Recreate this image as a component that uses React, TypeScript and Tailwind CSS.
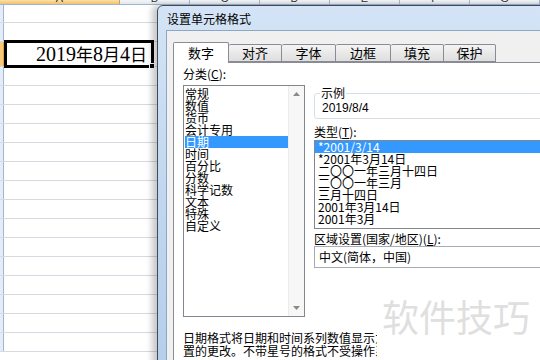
import React from "react";

const categories = ["常规", "数值", "货币", "会计专用", "日期", "时间", "百分比", "分数", "科学记数", "文本", "特殊", "自定义"];
const types = ["*2001/3/14", "*2001年3月14日", "二〇〇一年三月十四日", "二〇〇一年三月", "三月十四日", "2001年3月14日", "2001年3月"];
const tabs = [
  { label: "数字", w: "w-[56px]" },
  { label: "对齐", w: "w-[53px]" },
  { label: "字体", w: "w-[54px]" },
  { label: "边框", w: "w-[55px]" },
  { label: "填充", w: "w-[53px]" },
  { label: "保护", w: "w-[52px]" },
];
const cols = ["B", "C", "D", "E", "F", "G"];

function Row({ h, active, children }: { h: string; active?: boolean; children?: React.ReactNode }) {
  return (
    <div className={`flex ${h} border-b border-[#d4d9e2]`}>
      <div className={`w-[4px] shrink-0 border-r ${active ? "bg-[#f6c879] border-[#d9a550]" : "bg-[#e4ecf7] border-[#9eb6ce]"}`} />
      <div className="flex-1">{children}</div>
    </div>
  );
}

function Arrow({ up }: { up?: boolean }) {
  return (
    <svg width="7" height="4" viewBox="0 0 7 4">
      <path d={up ? "M0 4 L3.5 0 L7 4 Z" : "M0 0 L3.5 4 L7 0 Z"} fill="#8a8a8a" />
    </svg>
  );
}

export default function App() {
  return (
    <div className="relative w-[540px] h-[360px] overflow-hidden bg-white font-['Noto_Sans_CJK_SC',sans-serif] text-black">
      {/* sheet */}
      <div className="flex h-[5px] overflow-hidden border-b border-[#9eb6ce]">
        <div className="w-[148px] flex items-end justify-center bg-gradient-to-b from-[#fbe0a8] to-[#f3c16a] border-r border-[#c9a060]">
          <span className="text-[11px] leading-none text-[#333] font-['Liberation_Sans',sans-serif]">A</span>
        </div>
        {cols.map((c) => (
          <div key={c} className="w-[70px] shrink-0 flex items-end justify-center bg-gradient-to-b from-[#f3f5f8] to-[#e2e7ee] border-r border-[#a9b8ca]">
            <span className="text-[11px] leading-none text-[#333] font-['Liberation_Sans',sans-serif]">{c}</span>
          </div>
        ))}
      </div>
      <Row h="h-[18px]" />
      <Row h="h-[19px]" />
      <Row h="h-[25px]" active>
        <div className="relative -mt-[2px] h-[28px] w-[150px] border-[3px] border-black flex items-center justify-end pr-[4px]">
          <span className="font-['Liberation_Serif','Noto_Sans_CJK_SC',serif] text-[20px] leading-none">
            2019<span className="text-[17px]">年</span>8<span className="text-[17px]">月</span>4<span className="text-[17px]">日</span>
          </span>
          <div className="absolute -right-[4px] -bottom-[4px] w-[6px] h-[6px] bg-black border border-white" />
        </div>
      </Row>
      {Array.from({ length: 15 }).map((_, i) => (
        <Row key={i} h="h-[19px]" />
      ))}

      {/* dialog */}
      <div className="absolute left-[157px] top-[5px] w-[420px] h-[380px] rounded-tl-[6px] border border-[#3d4b5c] bg-gradient-to-b from-[#d4e4f6] via-[#c0d7ef] to-[#b4cdea] shadow-[-5px_0_6px_rgba(0,0,0,0.22)] flex flex-col">
        <div className="h-[24px] flex items-center pl-[9px] pt-[2px] text-[12px] text-black">设置单元格格式</div>
        <div className="flex-1 ml-[8px] border-l border-t border-[#8ea6c2] bg-[#f0f0f0] pl-[6px] pt-[10px] flex flex-col">
          <div className="flex items-end h-[21px]">
            {tabs.map((t, i) =>
              i === 0 ? (
                <div key={t.label} className={`${t.w} h-[21px] -mb-px relative z-10 bg-white border border-b-0 border-[#898c95] rounded-t-[2px] flex items-center justify-center text-[13px]`}>
                  {t.label}
                </div>
              ) : (
                <div key={t.label} className={`${t.w} h-[18px] bg-gradient-to-b from-[#f4f4f4] to-[#dedede] border border-l-0 border-[#898c95] rounded-t-[2px] flex items-center justify-center text-[13px]`}>
                  {t.label}
                </div>
              )
            )}
          </div>
          <div className="flex-1 bg-white border border-[#898c95] pl-[9px] flex flex-col">
            <div className="flex gap-[9px]">
              {/* category */}
              <div className="w-[122px] shrink-0 flex flex-col">
                <div className="mt-[3px] h-[16px] leading-[16px] text-[12px]">
                  分类(<span className="underline">C</span>):
                </div>
                <div className="mt-[3px] h-[232px] border border-[#828790] flex">
                  <div className="flex-1 pt-[2px] pl-[1px] text-[12px] leading-[12px]">
                    {categories.map((c) => (
                      <div key={c} className={c === "日期" ? "bg-[#3399ff] text-white" : ""}>
                        {c}
                      </div>
                    ))}
                  </div>
                  <div className="w-[16px] bg-[#f7f7f7] border-l border-[#ececec] flex flex-col items-center justify-between py-[6px]">
                    <Arrow up />
                    <Arrow />
                  </div>
                </div>
              </div>
              {/* right side */}
              <div className="flex-1 flex flex-col">
                <div className="relative mt-[30px] h-[26px] border border-[#d5dfe5] rounded-[3px] pl-[7px] pt-[8px] text-[12px] leading-[12px] font-['Liberation_Sans','Noto_Sans_CJK_SC',sans-serif]">
                  <span className="absolute -top-[8px] left-[5px] bg-white px-[1px] text-[12px] leading-[14px] font-['Noto_Sans_CJK_SC',sans-serif]">示例</span>
                  2019/8/4
                </div>
                <div className="mt-[6px] h-[14px] leading-[14px] text-[12px]">
                  类型(<span className="underline">T</span>):
                </div>
                <div className="mt-[1px] h-[89px] border border-[#828790] text-[12px] leading-[12px]">
                  {types.map((t, i) => (
                    <div key={t} className={`pl-[3px] ${i === 0 ? "bg-[#3399ff] text-white" : ""}`}>
                      {t}
                    </div>
                  ))}
                </div>
                <div className="mt-[3px] h-[13px] leading-[13px] text-[12px]">
                  区域设置(国家/地区)(<span className="underline">L</span>):
                </div>
                <div className="mt-[1px] h-[22px] border border-[#a5acb5] flex items-center pl-[4px] text-[12px]">
                  中文(简体，中国)
                </div>
              </div>
            </div>
            <div className="mt-[14px] w-[194px] overflow-hidden whitespace-nowrap text-[12px] leading-[13px]">
              <div>日期格式将日期和时间系列数值显示为日期值。</div>
              <div>置的更改。不带星号的格式不受操作系统设</div>
            </div>
          </div>
        </div>
      </div>

      {/* watermark */}
      <div className="absolute left-[382px] top-[294px] text-[37px] leading-[44px] text-[#dfdfdf] font-['Noto_Sans_CJK_SC',sans-serif]">
        软件技巧
      </div>
    </div>
  );
}
